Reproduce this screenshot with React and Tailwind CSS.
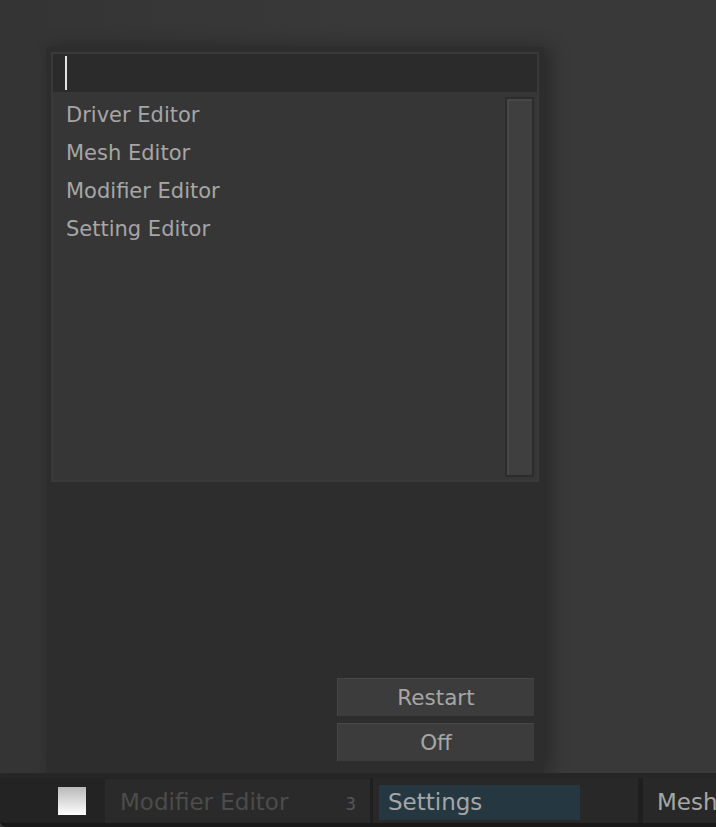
const items = ['Driver Editor', 'Mesh Editor', 'Modifier Editor', 'Setting Editor'];

const font = { fontFamily: '"DejaVu Sans", "Liberation Sans", sans-serif' };

const PanelButton = ({ label }) => (
  <button
    type="button"
    className="h-[38px] w-[197px] bg-[#3c3c3c] border-t border-l border-[#474747] text-[21.5px] text-[#a6a6a6] leading-none"
  >
    {label}
  </button>
);

const App = () => {
  return (
    <div className="w-[716px] h-[827px] flex flex-col bg-[#393939] overflow-hidden" style={font}>
      <div className="flex-1 flex pl-[46px] pt-[47px] bg-gradient-to-r from-[#343434] via-[#393939] to-[#393939]">
        <div className="w-[498px] flex flex-col bg-[#2d2d2d] shadow-[6px_0_18px_rgba(0,0,0,0.3)]">
          <div className="mx-[5px] mt-[5px] h-[430px] flex flex-col border-2 border-[#393939] bg-[#363636]">
            <div className="h-[38px] bg-[#2b2b2b] flex items-center pl-[12px]">
              <div className="w-[2px] h-[34px] bg-[#e2e2e2]" />
            </div>
            <div className="flex-1 flex">
              <ul className="flex-1 pt-[5px] pl-[13px]">
                {items.map((item) => (
                  <li key={item} className="h-[38px] flex items-center text-[21px] text-[#a6a6a6]">
                    {item}
                  </li>
                ))}
              </ul>
              <div className="w-[29px] mt-[5px] mb-[3px] mr-[3px] border-2 border-[#2c2c2c] bg-[#3f3f3f]">
                <div className="h-full border-l-2 border-t-2 border-[#474747]" />
              </div>
            </div>
          </div>
          <div className="flex-1 flex flex-col items-end justify-end gap-[7px] pr-[10px] pb-[12px]">
            <PanelButton label="Restart" />
            <PanelButton label="Off" />
          </div>
        </div>
      </div>
      <div className="h-[54px] flex bg-[#232323] border-t-[5px] border-b-4 border-t-[#262626] border-b-[#191919] rounded-bl-[6px]">
        <div className="w-[105px] flex items-center pl-[58px]">
          <div className="w-[28px] h-[28px] bg-gradient-to-b from-[#b9b9b9] to-white" />
        </div>
        <div className="w-[265px] mt-[1px] flex items-center justify-between pl-[15px] pr-[14px] pt-[3px] bg-[#2a2a2a]">
          <span className="text-[23px] text-[#4c4c4c]">Modifier Editor</span>
          <span className="text-[17px] text-[#565656] pt-[4px]">3</span>
        </div>
        <div className="w-[3px] bg-[#1f1f1f]" />
        <div className="w-[265px] flex items-center px-[6px] bg-[#282828]">
          <div className="w-[201px] h-[35px] mt-[4px] flex items-center pl-[9px] bg-[#253740] text-[23px] text-[#a6a6a6]">
            Settings
          </div>
        </div>
        <div className="w-[5px] bg-[#1f1f1f]" />
        <div className="flex-1 flex items-center pl-[14px] pt-[3px] bg-[#282828] text-[23px] text-[#a6a6a6] whitespace-nowrap overflow-hidden">
          Mesh
        </div>
      </div>
    </div>
  );
};

export default App;
